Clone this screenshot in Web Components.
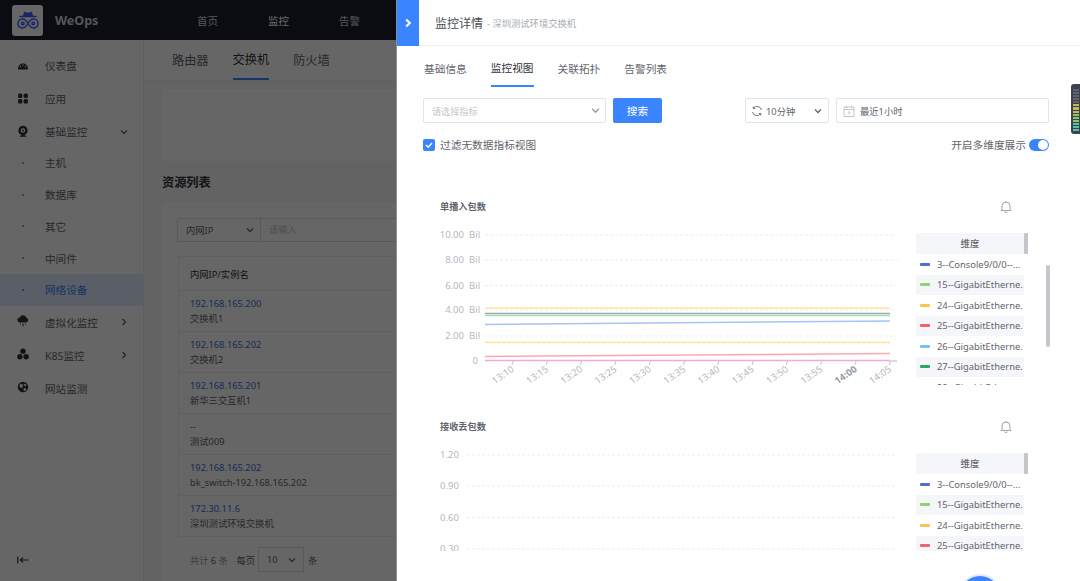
<!DOCTYPE html>
<html lang="zh">
<head>
<meta charset="utf-8">
<title>WeOps</title>
<style>
  html, body { margin: 0; height: 100%; overflow: hidden; }
  body { font-family: "Noto Sans", "Noto Sans CJK SC", sans-serif; color: #313238; }
</style>
</head>
<body>
<weops-page>
  <weops-header slot="header"></weops-header>
  <weops-sidebar slot="sidebar"></weops-sidebar>
  <weops-resources slot="main"></weops-resources>
  <monitor-drawer slot="drawer">
    <metric-chart slot="charts" heading="单播入包数" kind="packets"></metric-chart>
    <metric-chart slot="charts" heading="接收丢包数" kind="drops"></metric-chart>
  </monitor-drawer>
</weops-page>

<script>
const chevron = (dir, size = 10, color = 'currentColor', sw = 1.3) => {
  const d = dir === 'down' ? 'M2 3.5 5 6.5 8 3.5' : 'M3.5 2 6.5 5 3.5 8';
  return `<svg width="${size}" height="${size}" viewBox="0 0 10 10" fill="none" stroke="${color}" stroke-width="${sw}"><path d="${d}"/></svg>`;
};

class WeopsPage extends HTMLElement {
  constructor() {
    super();
    this.attachShadow({mode: 'open'});
    this.shadowRoot.innerHTML = `
    <style>
      :host { display: block; position: relative; width: 1080px; height: 581px; overflow: hidden; background: #f7f8fa; }
      #shell { display: grid; grid-template-columns: 144px 1fr; grid-template-rows: 40px 1fr; height: 100%; }
      #head { grid-column: 1 / 3; }
      #mask { position: absolute; inset: 0; background: rgba(0, 0, 0, .6); }
      #drawer { position: absolute; top: 0; right: 0; bottom: 0; width: 684px; }
    </style>
    <div id="shell">
      <div id="head"><slot name="header"></slot></div>
      <slot name="sidebar"></slot>
      <slot name="main"></slot>
    </div>
    <div id="mask"></div>
    <div id="drawer"><slot name="drawer"></slot></div>
    `;
  }
}

class WeopsHeader extends HTMLElement {
  constructor() {
    super();
    this.attachShadow({mode: 'open'});
    this.shadowRoot.innerHTML = `
    <style>
      :host { display: flex; align-items: center; height: 40px; background: #191f2f; color: #d0d2d8; font-size: 10.5px; }
      #logo { width: 31px; height: 31px; margin-left: 12px; border-radius: 3px; background: #fff; display: flex; align-items: center; justify-content: center; }
      #brand { margin-left: 12px; width: 142px; font-size: 12.5px; font-weight: 700; color: #d0d4dc; }
      nav { display: flex; gap: 50px; }
      .on { color: #fff; }
    </style>
    <div id="logo">
      <svg width="22" height="22" viewBox="0 0 22 22" fill="none" stroke="#3f5cff" stroke-width="1.5">
        <path fill="#3f5cff" stroke="none" d="M6 7 7 2.500 9.500 3.500h3L15 2.500 16 7Z"/>
        <path stroke-linecap="round" d="M3 7.500h16"/>
        <path d="M11 14.500C9 11 7.500 10 5.500 10a4.500 4.500 0 0 0 0 9C7.500 19 9 18 11 14.500S14.500 10 16.500 10a4.500 4.500 0 0 1 0 9C14.500 19 13 18 11 14.500Z"/>
        <circle cx="5.800" cy="14.500" r="1.300"/><circle cx="16.200" cy="14.500" r="1.300"/>
      </svg>
    </div>
    <div id="brand">WeOps</div>
    <nav><span>首页</span><span class="on">监控</span><span>告警</span></nav>
    `;
  }
}

class WeopsSidebar extends HTMLElement {
  constructor() {
    super();
    this.attachShadow({mode: 'open'});
    const icons = {
      gauge: '<path d="M1 9.500a5 5 0 0 1 10 0c0 .8-.5 1-1 1H2c-.5 0-1-.2-1-1Z"/><g fill="#fff"><circle cx="3.500" cy="7.500" r=".7"/><circle cx="6" cy="6" r=".7"/><circle cx="8.500" cy="7.500" r=".7"/></g>',
      apps: '<rect x="1" y="1.500" width="4.400" height="4.400" rx="1.500"/><rect x="6.600" y="1.500" width="4.400" height="4.400" rx="1.500"/><rect x="1" y="7" width="4.400" height="4.400" rx="1.500"/><rect x="6.600" y="7" width="4.400" height="4.400" rx="1.500"/>',
      cam: '<path fill-rule="evenodd" d="M6 .8a4.700 4.700 0 0 1 1.800 9v.9h1.500v1H2.700v-1h1.500v-.9A4.700 4.700 0 0 1 6 .8Zm0 2.500a2.200 2.200 0 1 0 0 4.400 2.200 2.200 0 0 0 0-4.400Z"/><circle cx="6" cy="5.500" r="1"/>',
      cloud: '<path d="M3 7.500a2.500 2.500 0 0 1-.2-5A3.500 3.500 0 0 1 9.500 3a2.300 2.300 0 0 1-.3 4.500Z"/><path d="M3 8.500h1v1H3zM5.500 8.500h1v3h-1zM8 8.500h1v1H8z"/>',
      k8s: '<circle cx="6" cy="3.300" r="2.700"/><circle cx="2.900" cy="8.800" r="2.700"/><circle cx="9.100" cy="8.800" r="2.700"/>',
      globe: '<path fill-rule="evenodd" d="M6 .8a5.200 5.200 0 1 1 0 10.400A5.200 5.200 0 0 1 6 .8Zm-2.500 2L2.300 5l1.400 2 2-.8.300-2.400Zm5 4L6.500 7.500l.3 2.600 2.400-.8ZM7 2.500l-.4 1.800 2.200 1 1-1.200Z"/>'
    };
    const row = (icon, text, arrow = '') => `
      <a class="item"><svg class="ico" width="12" height="12" viewBox="0 0 12 12" fill="#313238">${icons[icon]}</svg>
      <span>${text}</span>${arrow ? `<i>${chevron(arrow, 10, '#63656e')}</i>` : ''}</a>`;
    const sub = (text, cur) => `<a class="item sub ${cur ? 'cur' : ''}"><b></b><span>${text}</span></a>`;
    this.shadowRoot.innerHTML = `
    <style>
      :host { display: flex; flex-direction: column; background: #fff; border-right: 1px solid #eceef2; box-sizing: border-box; font-size: 10.6px; color: #63656e; padding-top: 9px; height: 541px; }
      .item { display: flex; align-items: center; height: 33px; padding-left: 17px; }
      .ico { width: 12px; height: 12px; margin-right: 16px; flex: none; margin-top: -2px; }
      .item i { margin-left: auto; margin-right: 14px; display: flex; font-style: normal; }
      .sub { height: 31.750px; padding-left: 22px; }
      .item:not(.sub) + .sub { margin-top: -1px; }
      .sub b { width: 2px; height: 2px; background: #8a8d96; border-radius: 50%; margin-right: 21px; }
      .cur { background: #e1ecff; color: #3a84ff; }
      .cur b { background: #3a84ff; }
      #fold { margin-top: auto; padding: 0 0 15px 17px; height: 12px; }
    </style>
    ${row('gauge', '仪表盘')}
    ${row('apps', '应用')}
    ${row('cam', '基础监控', 'down')}
    ${sub('主机')}${sub('数据库')}${sub('其它')}${sub('中间件')}${sub('网络设备', true)}
    ${row('cloud', '虚拟化监控', 'right')}
    ${row('k8s', 'K8S监控', 'right')}
    ${row('globe', '网站监测')}
    <div id="fold"><svg width="12" height="12" viewBox="0 0 12 12" fill="none" stroke="#313238" stroke-width="1.200"><path d="M.8 2.500v7M11.500 6H3.500M6 3.500 3.500 6 6 8.500"/></svg></div>
    `;
  }
}

class WeopsResources extends HTMLElement {
  constructor() {
    super();
    this.attachShadow({mode: 'open'});
    const rows = [
      ['192.168.165.200', '交换机1'], ['192.168.165.202', '交换机2'], ['192.168.165.201', '新华三交互机1'],
      ['--', '测试009'], ['192.168.165.202', 'bk_switch-192.168.165.202'], ['172.30.11.6', '深圳测试环境交换机']
    ];
    this.shadowRoot.innerHTML = `
    <style>
      :host { display: block; overflow: hidden; height: 541px; font-size: 9.300px; color: #63656e; }
      #tabs { display: flex; gap: 24px; height: 40px; padding-left: 28px; background: #fff; font-size: 12.200px; box-shadow: 0 1px 2px rgba(0,0,0,.03); box-sizing: border-box; }
      #tabs span { display: flex; align-items: center; height: 40px; box-sizing: border-box; padding-bottom: 1px; }
      #tabs .on { color: #313238; border-bottom: 2px solid #3a84ff; }
      #body { padding: 9px 0 0 18px; }
      #banner { height: 72px; background: #fff; }
      h2 { margin: 0; height: 42px; line-height: 43px; font-size: 12.200px; color: #313238; font-weight: 700; }
      #card { background: #fff; padding: 15px 0 0 15px; height: 400px; }
      #filter { display: flex; height: 24px; width: 300px; border: 1px solid #dcdee5; border-radius: 2px; box-sizing: border-box; }
      #filter .type { width: 83px; display: flex; align-items: center; justify-content: space-between; padding: 0 5px 0 8px; border-right: 1px solid #dcdee5; box-sizing: border-box; flex: none; }
      #filter .in { padding-left: 8px; line-height: 22px; color: #c4c6cc; }
      table { border-collapse: collapse; width: 300px; margin-top: 14px; margin-left: 1px; border-left: 1px solid #eef0f4; }
      th { text-align: left; font-weight: 400; height: 33px; padding: 0 0 0 11px; border-top: 1px solid #eef0f4; border-bottom: 1px solid #eef0f4; color: #313238; }
      td { height: 40px; padding: 0 0 0 11px; border-bottom: 1px solid #eef0f4; line-height: 15px; }
      td em { display: block; font-style: normal; color: #3a6fd8; }
      #pager { display: flex; align-items: center; gap: 3px; margin: 10px 0 0 13px; color: #979ba5; font-size: 9.200px; }
      #pager .n { color: #63656e; }
      #pager .sel { width: 46px; height: 25px; border: 1px solid #dcdee5; box-sizing: border-box; display: flex; align-items: center; justify-content: space-between; padding: 0 6px 0 8px; color: #63656e; margin-right: 1px; }
    </style>
    <div id="tabs"><span>路由器</span><span class="on">交换机</span><span>防火墙</span></div>
    <div id="body">
      <div id="banner"></div>
      <h2>资源列表</h2>
      <div id="card">
        <div id="filter"><div class="type">内网IP ${chevron('down', 10, '#63656e')}</div><div class="in">请输入</div></div>
        <table>
          <tr><th>内网IP/实例名</th></tr>
          ${rows.map(r => `<tr><td><em>${r[0]}</em>${r[1]}</td></tr>`).join('')}
        </table>
        <div id="pager"><span>共计 <span class="n">6</span> 条</span><span class="n" style="margin-left:6px">每页</span><div class="sel">10 ${chevron('down', 10, '#63656e')}</div><span class="n">条</span></div>
      </div>
    </div>
    `;
  }
}

class MonitorDrawer extends HTMLElement {
  constructor() {
    super();
    this.attachShadow({mode: 'open'});
    this.shadowRoot.innerHTML = `
    <style>
      :host { display: block; position: relative; height: 581px; background: #fff; border-left: 1px solid #8d8d8d; box-sizing: border-box; color: #63656e; font-size: 10.700px; overflow: hidden; }
      #top { display: flex; align-items: center; height: 46px; border-bottom: 1px solid #eceef2; box-sizing: border-box; }
      #back { width: 22px; height: 46px; background: #3a84ff; display: flex; align-items: center; justify-content: center; color: #fff; flex: none; margin-bottom: -1px; }
      h1 { margin: 0 0 0 16px; font-size: 12px; font-weight: 400; color: #4a4c54; }
      #sub { margin-left: 4px; font-size: 9.300px; color: #a8abb3; }
      #tabs { display: flex; gap: 24px; height: 41px; padding-left: 27px; }
      #tabs span { display: flex; align-items: center; height: 41px; box-sizing: border-box; padding-top: 4px; }
      #tabs .on { color: #313238; border-bottom: 2px solid #3a84ff; }
      #tools { display: flex; align-items: center; padding: 11px 31px 0 26px; }
      .box { height: 25px; border: 1px solid #e1e3ea; border-radius: 2px; box-sizing: border-box; display: flex; align-items: center; color: #63656e; font-size: 9.300px; }
      #metric { width: 183px; justify-content: space-between; padding: 0 4px 0 8px; color: #c4c6cc; font-size: 9.100px; }
      #metric svg { color: #979ba5; }
      #search { width: 49px; height: 25px; margin-left: 7px; background: #3a84ff; color: #fff; border-radius: 2px; display: flex; align-items: center; justify-content: center; }
      #refresh { width: 84px; margin-left: auto; padding: 0 5px; justify-content: flex-start; gap: 3px; }
      #refresh .ch { margin-left: auto; display: flex; }
      #range { width: 213px; margin-left: 7px; padding: 0 6px; gap: 5px; }
      #opts { display: flex; align-items: center; justify-content: space-between; padding: 15px 31px 0 26px; height: 13px; }
      #check { display: flex; align-items: center; gap: 5px; }
      #check b { width: 12px; height: 12px; border-radius: 2px; background: #3a84ff; display: flex; align-items: center; justify-content: center; }
      #multi { display: flex; align-items: center; gap: 3px; }
      #switch { width: 20px; height: 12px; border-radius: 6px; background: #3a84ff; position: relative; }
      #switch::after { content: ""; position: absolute; right: 1px; top: 1px; width: 10px; height: 10px; border-radius: 50%; background: #fff; }
      #scroll { position: relative; height: 351px; margin-top: 49px; overflow: hidden; }
      #bar { position: absolute; right: 30px; top: 65px; width: 4px; height: 82px; border-radius: 2px; background: #c4c6cc; }
      #meter { position: absolute; top: 84px; right: 0; width: 9px; height: 50px; border-radius: 3px 0 0 3px; background: #3e4250; display: flex; flex-direction: column; gap: 1px; padding: 5px 1px 3px 2px; box-sizing: border-box; }
      #meter i { flex: 1; background: #5f636e; }
      #meter i.y { background: #c4b84f; }
      #meter i.g { background: #8fc46f; }
      #meter i.t { background: #4fc4a4; }
      #fab { position: absolute; left: 563px; top: 576px; width: 40px; height: 40px; border-radius: 50%; background: #3a84ff; box-shadow: 0 0 0 2px #e1ecff; }
    </style>
    <div id="top">
      <div id="back">${chevron('right', 12, '#fff', 1.8)}</div>
      <h1>监控详情</h1><span id="sub">- 深圳测试环境交换机</span>
    </div>
    <div id="tabs"><span>基础信息</span><span class="on">监控视图</span><span>关联拓扑</span><span>告警列表</span></div>
    <div id="tools">
      <div class="box" id="metric">请选择指标 ${chevron('down', 11, 'currentColor')}</div>
      <div id="search">搜索</div>
      <div class="box" id="refresh">
        <svg width="12" height="12" viewBox="0 0 12 12" fill="none" stroke="#63656e" stroke-width=".9"><path d="M10.500 5A4.600 4.600 0 0 0 2.300 3.300M1.500 7a4.600 4.600 0 0 0 8.200 1.700"/><path d="M2.200 1.500v2h2M9.800 10.500v-2h-2"/></svg>
        <span>10分钟</span><span class="ch">${chevron('down', 10, '#63656e')}</span>
      </div>
      <div class="box" id="range">
        <svg width="12" height="12" viewBox="0 0 12 12" fill="none" stroke="#b4b7bf" stroke-width=".8"><path d="M1 2h10v9.500H1zM1 4.500h10M3.500 .8V3M8.500 .8V3M5 7h2L5.800 9.500"/></svg>
        <span>最近1小时</span>
      </div>
    </div>
    <div id="opts">
      <div id="check"><b><svg width="10" height="10" viewBox="0 0 10 10" fill="none" stroke="#fff" stroke-width="1.400"><path d="M2 5 4.200 7.200 8 3"/></svg></b><span>过滤无数据指标视图</span></div>
      <div id="multi"><span>开启多维度展示</span><div id="switch"></div></div>
    </div>
    <div id="scroll"><slot name="charts"></slot><div id="bar"></div></div>
    <div id="meter"><i></i><i></i><i></i><i></i><i></i><i class="y"></i><i class="y"></i><i class="y"></i><i class="g"></i><i class="g"></i><i class="g"></i><i class="t"></i><i class="t"></i><i class="t"></i></div>
    <div id="fab"></div>
    `;
  }
}

class MetricChart extends HTMLElement {
  constructor() {
    super();
    this.attachShadow({mode: 'open'});
    const packets = this.getAttribute('kind') === 'packets';
    const legend = [
      ['#4d6fd0', '3--Console9/0/0--...'], ['#8fd16f', '15--GigabitEtherne.'], ['#ffc44d', '24--GigabitEtherne.'],
      ['#f0636a', '25--GigabitEtherne.'], ['#76c4e2', '26--GigabitEtherne.'], ['#2aa866', '27--GigabitEtherne.'],
      ['#b574d8', '28--GigabitEtherne.']
    ].slice(0, packets ? 7 : 4);
    this.shadowRoot.innerHTML = `
    <style>
      :host { display: block; position: relative; height: 220px; }
      #head { position: absolute; left: 43px; top: 0; font-size: 9.200px; font-weight: 700; color: #63656e; line-height: 14px; }
      #bell { position: absolute; left: 603px; top: 0; }
      svg.plot { display: block; position: absolute; left: 0; top: 0; }
      text { font-family: "Noto Sans", "Noto Sans CJK SC", sans-serif; font-size: 9.500px; fill: #b4b7bf; }
      #legend { position: absolute; left: 519px; top: 33px; width: 112px; height: 152px; overflow: hidden; font-size: 9.400px; color: #63656e; }
      #legend header { width: 108px; height: 21px; line-height: 21px; background: #f5f6fa; text-align: center; color: #63656e; font-weight: 500; }
      #legend::after { content: ""; position: absolute; left: 108px; top: 0; width: 4px; height: 21px; background: #c4c6cc; border-radius: 1px; }
      .row { width: 108px; height: 20.500px; display: flex; align-items: center; white-space: nowrap; overflow: hidden; }
      .row:nth-of-type(even) { background: #f5f6fa; }
      .row i { width: 10px; height: 3px; margin: 0 7px 0 4px; flex: none; border-radius: 1px; }
    </style>
    <div id="head">${this.getAttribute('heading')}</div>
    <svg id="bell" width="12" height="13" viewBox="0 0 12 13" fill="none" stroke="#979ba5" stroke-width=".9"><path d="M2 9.500V6a4 4 0 0 1 8 0v3.500l1 1H1ZM6 1v1M4.800 11.500a1.200 1.200 0 0 0 2.400 0"/></svg>
    ${packets ? this.packetsPlot() : this.dropsPlot()}
    <div id="legend"><header>维度</header>${legend.map(l => `<div class="row"><i style="background:${l[0]}"></i><span>${l[1]}</span></div>`).join('')}</div>
    `;
  }

  // y offset of the plots: chart 1 starts at page y 200, so a page y maps to y - 200
  grid(ys, x1) {
    return ys.map(y => `<line x1="${x1}" x2="500" y1="${y}" y2="${y}" stroke="#eceef4" stroke-dasharray="3 2"/>`).join('');
  }

  packetsPlot() {
    const ys = [35, 60, 85.5, 110, 136];
    const labels = ['10.00', '8.00', '6.00', '4.00', '2.00'];
    const series = [
      ['#ffe3a0', 108, 108], ['#a4a8b4', 113.500, 113.500], ['#a0e0bc', 115.500, 115.500],
      ['#a4c4f8', 124.500, 121], ['#ffe39a', 142.500, 142.500], ['#ffa8ac', 156.500, 153.500], ['#eeaad8', 160.500, 160.500]
    ];
    const times = ['13:10', '13:15', '13:20', '13:25', '13:30', '13:35', '13:40', '13:45', '13:50', '13:55', '14:00', '14:05'];
    return `<svg class="plot" width="510" height="190" viewBox="0 0 510 190">
      ${this.grid(ys, 88)}
      ${labels.map((l, i) => `<text x="67" y="${ys[i] + 3}" text-anchor="end">${l}</text><text x="72" y="${ys[i] + 3}">Bil</text>`).join('')}
      <text x="81" y="163.500" text-anchor="end">0</text>
      <line x1="493" x2="500" y1="161" y2="161" stroke="#b4b7bf"/>
      ${series.map(s => `<line x1="88" x2="493" y1="${s[1]}" y2="${s[2]}" stroke="${s[0]}" stroke-width="1.500"/>`).join('')}
      ${times.map((t, i) => {
        const x = 116 + i * 34.3;
        return `<line x1="${x}" x2="${x - 1}" y1="161" y2="165" stroke="#c4c6cc"/>
        <text transform="translate(${x - 3} 164) rotate(-35)" text-anchor="end" dominant-baseline="hanging" ${t === '14:00' ? 'style="font-weight:700;fill:#979ba5"' : ''}>${t}</text>`;
      }).join('')}
    </svg>`;
  }

  dropsPlot() {
    const ys = [35, 66, 97.500, 129];
    const labels = ['1.20', '0.90', '0.60', '0.30'];
    return `<svg class="plot" width="510" height="190" viewBox="0 0 510 190">
      ${this.grid(ys, 70)}
      ${labels.map((l, i) => `<text x="43" y="${ys[i] + 3}">${l}</text>`).join('')}
    </svg>`;
  }
}

customElements.define('weops-page', WeopsPage);
customElements.define('weops-header', WeopsHeader);
customElements.define('weops-sidebar', WeopsSidebar);
customElements.define('weops-resources', WeopsResources);
customElements.define('monitor-drawer', MonitorDrawer);
customElements.define('metric-chart', MetricChart);
</script>
</body>
</html>
